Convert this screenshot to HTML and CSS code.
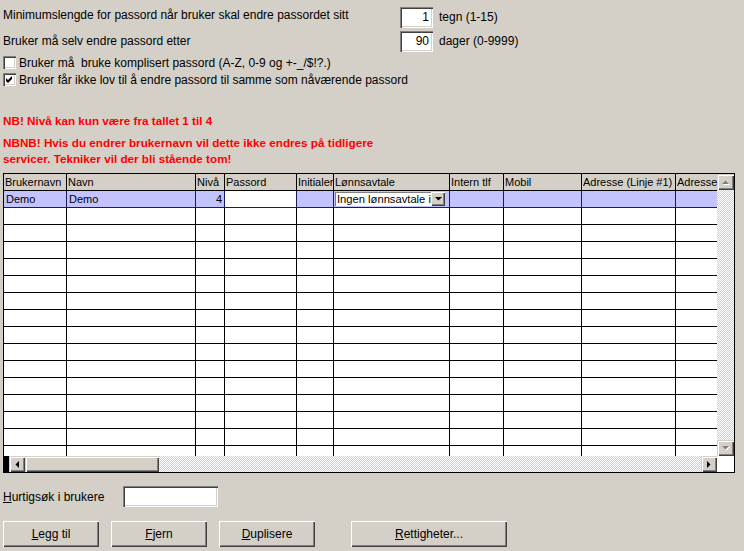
FILE: index.html
```html
<!DOCTYPE html>
<html lang="no">
<head>
<meta charset="utf-8">
<title>Brukere</title>
<link rel="stylesheet" href="styles.css">
</head>
<body>
<div class="page">
  <section class="settings">
    <div class="field-row field-row-first">
      <span class="field-label">Minimumslengde for passord når bruker skal endre passordet sitt</span>
      <div class="num-input">1</div>
      <span class="unit">tegn (1-15)</span>
    </div>
    <div class="field-row">
      <span class="field-label">Bruker må selv endre passord etter</span>
      <div class="num-input">90</div>
      <span class="unit">dager (0-9999)</span>
    </div>
    <div class="check-list">
      <div class="check-row">
        <span class="checkbox"></span>
        <span>Bruker må&nbsp; bruke komplisert passord (A-Z, 0-9 og +-_/$!?.)</span>
      </div>
      <div class="check-row">
        <span class="checkbox"><svg width="13" height="13" viewBox="0 0 13 13"><polygon points="3,5 5,7 9,3 9,6 5,10 3,8" fill="#000"/></svg></span>
        <span>Bruker får ikke lov til å endre passord til samme som nåværende passord</span>
      </div>
    </div>
  </section>

  <p class="note note-first">NB! Nivå kan kun være fra tallet 1 til 4</p>
  <p class="note">NBNB! Hvis du endrer brukernavn vil dette ikke endres på tidligere<br>servicer. Tekniker vil der bli stående tom!</p>

  <div class="grid">
    <div class="table-view">
      <div class="row header">
        <div class="cell">Brukernavn</div>
        <div class="cell">Navn</div>
        <div class="cell">Nivå</div>
        <div class="cell">Passord</div>
        <div class="cell">Initialer</div>
        <div class="cell">Lønnsavtale</div>
        <div class="cell">Intern tlf</div>
        <div class="cell">Mobil</div>
        <div class="cell">Adresse (Linje #1)</div>
        <div class="cell">Adresse (Linje #2)</div>
      </div>
      <div class="row selected">
        <div class="cell">Demo</div>
        <div class="cell">Demo</div>
        <div class="cell num">4</div>
        <div class="cell editing"></div>
        <div class="cell"></div>
        <div class="cell combo-cell">
          <div class="combo">
            <span class="combo-text">Ingen lønnsavtale&nbsp;inaktiv</span>
            <span class="combo-btn"><svg width="7" height="4" viewBox="0 0 7 4"><polygon points="0,0 7,0 3.5,3.5" fill="#000"/></svg></span>
          </div>
        </div>
        <div class="cell"></div>
        <div class="cell"></div>
        <div class="cell"></div>
        <div class="cell"></div>
      </div>
      <div class="row"><div class="cell"></div><div class="cell"></div><div class="cell"></div><div class="cell"></div><div class="cell"></div><div class="cell"></div><div class="cell"></div><div class="cell"></div><div class="cell"></div><div class="cell"></div></div>
      <div class="row"><div class="cell"></div><div class="cell"></div><div class="cell"></div><div class="cell"></div><div class="cell"></div><div class="cell"></div><div class="cell"></div><div class="cell"></div><div class="cell"></div><div class="cell"></div></div>
      <div class="row"><div class="cell"></div><div class="cell"></div><div class="cell"></div><div class="cell"></div><div class="cell"></div><div class="cell"></div><div class="cell"></div><div class="cell"></div><div class="cell"></div><div class="cell"></div></div>
      <div class="row"><div class="cell"></div><div class="cell"></div><div class="cell"></div><div class="cell"></div><div class="cell"></div><div class="cell"></div><div class="cell"></div><div class="cell"></div><div class="cell"></div><div class="cell"></div></div>
      <div class="row"><div class="cell"></div><div class="cell"></div><div class="cell"></div><div class="cell"></div><div class="cell"></div><div class="cell"></div><div class="cell"></div><div class="cell"></div><div class="cell"></div><div class="cell"></div></div>
      <div class="row"><div class="cell"></div><div class="cell"></div><div class="cell"></div><div class="cell"></div><div class="cell"></div><div class="cell"></div><div class="cell"></div><div class="cell"></div><div class="cell"></div><div class="cell"></div></div>
      <div class="row"><div class="cell"></div><div class="cell"></div><div class="cell"></div><div class="cell"></div><div class="cell"></div><div class="cell"></div><div class="cell"></div><div class="cell"></div><div class="cell"></div><div class="cell"></div></div>
      <div class="row"><div class="cell"></div><div class="cell"></div><div class="cell"></div><div class="cell"></div><div class="cell"></div><div class="cell"></div><div class="cell"></div><div class="cell"></div><div class="cell"></div><div class="cell"></div></div>
      <div class="row"><div class="cell"></div><div class="cell"></div><div class="cell"></div><div class="cell"></div><div class="cell"></div><div class="cell"></div><div class="cell"></div><div class="cell"></div><div class="cell"></div><div class="cell"></div></div>
      <div class="row"><div class="cell"></div><div class="cell"></div><div class="cell"></div><div class="cell"></div><div class="cell"></div><div class="cell"></div><div class="cell"></div><div class="cell"></div><div class="cell"></div><div class="cell"></div></div>
      <div class="row"><div class="cell"></div><div class="cell"></div><div class="cell"></div><div class="cell"></div><div class="cell"></div><div class="cell"></div><div class="cell"></div><div class="cell"></div><div class="cell"></div><div class="cell"></div></div>
      <div class="row"><div class="cell"></div><div class="cell"></div><div class="cell"></div><div class="cell"></div><div class="cell"></div><div class="cell"></div><div class="cell"></div><div class="cell"></div><div class="cell"></div><div class="cell"></div></div>
      <div class="row"><div class="cell"></div><div class="cell"></div><div class="cell"></div><div class="cell"></div><div class="cell"></div><div class="cell"></div><div class="cell"></div><div class="cell"></div><div class="cell"></div><div class="cell"></div></div>
      <div class="row"><div class="cell"></div><div class="cell"></div><div class="cell"></div><div class="cell"></div><div class="cell"></div><div class="cell"></div><div class="cell"></div><div class="cell"></div><div class="cell"></div><div class="cell"></div></div>
      <div class="row"><div class="cell"></div><div class="cell"></div><div class="cell"></div><div class="cell"></div><div class="cell"></div><div class="cell"></div><div class="cell"></div><div class="cell"></div><div class="cell"></div><div class="cell"></div></div>
    </div>
    <div class="vscroll">
      <span class="sbtn"><svg width="8" height="5" viewBox="0 0 8 5"><polygon points="1,5 8,5 4.5,1.5" fill="#fff"/><polygon points="0,4 7,4 3.5,0.5" fill="#808080"/></svg></span>
      <span class="track"></span>
      <span class="sbtn"><svg width="8" height="5" viewBox="0 0 8 5"><polygon points="1,1 8,1 4.5,4.5" fill="#fff"/><polygon points="0,0 7,0 3.5,3.5" fill="#808080"/></svg></span>
    </div>
    <div class="hscroll">
      <span class="frozen"></span>
      <span class="sbtn"><svg width="4" height="7" viewBox="0 0 4 7"><polygon points="4,0 4,7 0.5,3.5" fill="#000"/></svg></span>
      <span class="thumb"></span>
      <span class="track"></span>
      <span class="sbtn"><svg width="4" height="7" viewBox="0 0 4 7"><polygon points="0,0 0,7 3.5,3.5" fill="#000"/></svg></span>
    </div>
    <div class="corner"></div>
  </div>

  <div class="search-row">
    <span class="search-label"><u>H</u>urtigsøk i brukere</span>
    <div class="text-input"></div>
  </div>

  <div class="actions">
    <button class="btn"><u>L</u>egg til</button>
    <button class="btn"><u>F</u>jern</button>
    <button class="btn"><u>D</u>uplisere</button>
    <button class="btn btn-wide"><u>R</u>ettigheter...</button>
  </div>
</div>
</body>
</html>
```

FILE: styles.css
```css
* { box-sizing: border-box; }
html, body { margin: 0; padding: 0; }
body {
  background: #d4d0c8;
  font-family: "Liberation Sans", Arial, sans-serif;
  font-size: 12px;
  color: #000;
  width: 744px;
  height: 551px;
  overflow: hidden;
}
.page { padding: 6px 0 0 3px; }

.field-row {
  display: flex;
  align-items: center;
  height: 22px;
  margin-bottom: 2px;
}
.field-label { width: 397px; }
.field-row-first .field-label { padding-bottom: 5px; }
.num-input {
  width: 33px;
  height: 21px;
  background: #fff;
  text-align: right;
  padding: 2px 4px 0 0;
  line-height: 17px;
  box-shadow: inset 1px 1px #808080, inset 2px 2px #404040, inset -1px -1px #fff, inset -2px -2px #d4d0c8;
}
.unit { margin-left: 6px; }

.check-list { margin-top: 1px; }
.check-row {
  display: flex;
  align-items: center;
  height: 17px;
  gap: 3px;
}
.checkbox {
  width: 13px;
  height: 13px;
  background: #fff;
  box-shadow: inset 1px 1px #808080, inset 2px 2px #404040, inset -1px -1px #fff, inset -2px -2px #d4d0c8;
  display: block;
}
.checkbox svg { display: block; }

.note {
  margin: 6px 0 0 0;
  color: #ff0000;
  font-weight: bold;
  font-size: 11.7px;
  line-height: 16px;
}
.note-first { margin-top: 25px; }

.grid {
  margin-top: 6px;
  width: 732px;
  height: 300px;
  border: 1px solid #000;
  background: #fff;
  display: grid;
  grid-template-columns: 713px 17px;
  grid-template-rows: 282px 16px;
}
.table-view { overflow: hidden; font-size: 11px; }
.row {
  display: grid;
  grid-template-columns: 63px 129px 29px 72px 37px 116px 54px 78px 94px 94px;
  width: 766px;
}
.cell {
  height: 17px;
  border-right: 1px solid #000;
  border-bottom: 1px solid #000;
  padding: 0 1px 0 2px;
  line-height: 16px;
  white-space: nowrap;
  overflow: hidden;
}
.header .cell { background: #d4d0c8; padding-left: 1px; }
.selected .cell { background: #c3c3fd; border-color: #1a1a5e; }
.selected .cell.editing { background: #fff; }
.cell.num { text-align: right; padding-right: 2px; }
.cell.combo-cell { padding: 1px 4px 1px 1px; }
.combo {
  display: flex;
  height: 14px;
  background: #fff;
  box-shadow: inset 1px 1px #808080;
}
.combo-text {
  flex: 1;
  min-width: 0;
  overflow: hidden;
  white-space: nowrap;
  padding-left: 2px;
  line-height: 14px;
  font-size: 11.2px;
}
.combo-btn {
  flex: none;
  width: 14px;
  height: 14px;
  background: #d4d0c8;
  box-shadow: inset 1px 1px #fff, inset -1px -1px #404040, inset -2px -2px #808080;
  display: flex;
  align-items: center;
  justify-content: center;
}

.vscroll {
  display: flex;
  flex-direction: column;
}
.hscroll { display: flex; }
.sbtn {
  flex: none;
  width: 17px;
  height: 16px;
  background: #d4d0c8;
  box-shadow: inset 1px 1px #d4d0c8, inset 2px 2px #fff, inset -1px -1px #404040, inset -2px -2px #808080;
  display: flex;
  align-items: center;
  justify-content: center;
}
.hscroll .sbtn { width: 16px; }
.track {
  flex: 1;
  background: repeating-conic-gradient(#fff 0 25%, #d4d0c8 0 50%) 0 0 / 2px 2px;
}
.frozen { width: 5px; background: #000; }
.thumb {
  width: 134px;
  background: #d4d0c8;
  box-shadow: inset 1px 1px #d4d0c8, inset 2px 2px #fff, inset -1px -1px #404040, inset -2px -2px #808080;
}
.corner { background: #fff; }

.search-row {
  display: flex;
  align-items: center;
  margin-top: 13px;
  height: 21px;
}
.search-label { width: 120px; }
.text-input {
  width: 95px;
  height: 21px;
  background: #fff;
  box-shadow: inset 1px 1px #808080, inset 2px 2px #404040, inset -1px -1px #fff, inset -2px -2px #d4d0c8;
}

.actions {
  display: flex;
  gap: 12px;
  margin-top: 14px;
}
.btn {
  width: 96px;
  height: 26px;
  border: none;
  background: #d4d0c8;
  font: inherit;
  color: #000;
  padding: 0;
  box-shadow: inset 1px 1px #fff, inset -1px -1px #404040, inset -2px -2px #808080;
}
.btn-wide { width: 156px; margin-left: 24px; }
```
